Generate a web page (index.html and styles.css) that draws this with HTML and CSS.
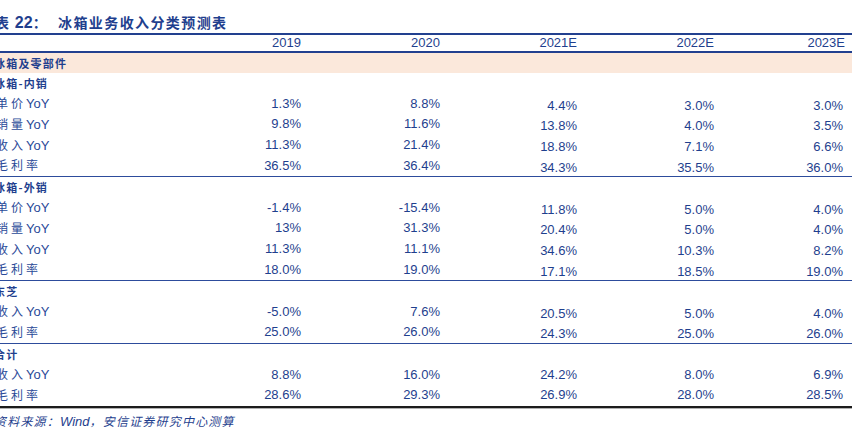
FILE: index.html
```html
<!DOCTYPE html>
<html lang="zh">
<head>
<meta charset="utf-8">
<title>表 22：冰箱业务收入分类预测表</title>
<link rel="stylesheet" href="styles.css">
</head>
<body>
<div class="page">
  <div class="title"><span class="cjk">表</span> 22<span class="cjk colon">：</span><span class="cjk">冰箱业务收入分类预测表</span></div>
  <div class="table">
    <div class="row head">
      <div class="lbl"></div><div class="num">2019</div><div class="num">2020</div><div class="num">2021E</div><div class="num">2022E</div><div class="num last">2023E</div><div></div>
    </div>
    <div class="row band"><div class="lbl sec">冰箱及零部件</div></div>
    <div class="section">
      <div class="row"><div class="lbl sec">冰箱-内销</div></div>
      <div class="row"><div class="lbl"><span class="c">单价</span>YoY</div><div class="num">1.3%</div><div class="num">8.8%</div><div class="num est">4.4%</div><div class="num est">3.0%</div><div class="num est">3.0%</div></div>
      <div class="row"><div class="lbl"><span class="c">销量</span>YoY</div><div class="num">9.8%</div><div class="num">11.6%</div><div class="num est">13.8%</div><div class="num est">4.0%</div><div class="num est">3.5%</div></div>
      <div class="row"><div class="lbl"><span class="c">收入</span>YoY</div><div class="num">11.3%</div><div class="num">21.4%</div><div class="num est">18.8%</div><div class="num est">7.1%</div><div class="num est">6.6%</div></div>
      <div class="row"><div class="lbl"><span class="c">毛利率</span></div><div class="num">36.5%</div><div class="num">36.4%</div><div class="num est">34.3%</div><div class="num est">35.5%</div><div class="num est">36.0%</div></div>
    </div>
    <div class="section">
      <div class="row"><div class="lbl sec">冰箱-外销</div></div>
      <div class="row"><div class="lbl"><span class="c">单价</span>YoY</div><div class="num">-1.4%</div><div class="num">-15.4%</div><div class="num est">11.8%</div><div class="num est">5.0%</div><div class="num est">4.0%</div></div>
      <div class="row"><div class="lbl"><span class="c">销量</span>YoY</div><div class="num">13%</div><div class="num">31.3%</div><div class="num est">20.4%</div><div class="num est">5.0%</div><div class="num est">4.0%</div></div>
      <div class="row"><div class="lbl"><span class="c">收入</span>YoY</div><div class="num">11.3%</div><div class="num">11.1%</div><div class="num est">34.6%</div><div class="num est">10.3%</div><div class="num est">8.2%</div></div>
      <div class="row"><div class="lbl"><span class="c">毛利率</span></div><div class="num">18.0%</div><div class="num">19.0%</div><div class="num est">17.1%</div><div class="num est">18.5%</div><div class="num est">19.0%</div></div>
    </div>
    <div class="section">
      <div class="row"><div class="lbl sec">东芝</div></div>
      <div class="row"><div class="lbl"><span class="c">收入</span>YoY</div><div class="num">-5.0%</div><div class="num">7.6%</div><div class="num est">20.5%</div><div class="num est">5.0%</div><div class="num est">4.0%</div></div>
      <div class="row"><div class="lbl"><span class="c">毛利率</span></div><div class="num">25.0%</div><div class="num">26.0%</div><div class="num est">24.3%</div><div class="num est">25.0%</div><div class="num est">26.0%</div></div>
    </div>
    <div class="section final">
      <div class="row"><div class="lbl sec">合计</div></div>
      <div class="row"><div class="lbl"><span class="c">收入</span>YoY</div><div class="num">8.8%</div><div class="num">16.0%</div><div class="num">24.2%</div><div class="num">8.0%</div><div class="num">6.9%</div></div>
      <div class="row"><div class="lbl"><span class="c">毛利率</span></div><div class="num">28.6%</div><div class="num">29.3%</div><div class="num">26.9%</div><div class="num">28.0%</div><div class="num">28.5%</div></div>
    </div>
  </div>
  <div class="source"><span class="c">资料来源：</span>Wind<span class="c">，安信证券研究中心测算</span></div>
</div>
</body>
</html>
```

FILE: styles.css
```css
html, body {
  margin: 0;
  padding: 0;
  background: #ffffff;
}
body {
  overflow: hidden;
  font-family: "Liberation Sans", Arial, "Noto Sans CJK SC", sans-serif;
  color: #1f3f8e;
}
.page {
  margin-left: -6px;
  width: 858px;
}
.title {
  margin-top: 12px;
  height: 21px;
  line-height: 21px;
  font-size: 16px;
  font-weight: bold;
  color: #1f3f8e;
  padding-left: 1px;
}
.title .cjk {
  font-family: "Noto Sans CJK SC", sans-serif;
  font-size: 14px;
  letter-spacing: 1.4px;
}
.title .colon {
  padding-right: 10px;
}
.table {
  width: 858px;
}
.row {
  display: grid;
  grid-template-columns: 211px 96px 139px 137px 137px 129px 9px;
  height: 20.6px;
  align-items: center;
  font-size: 13px;
}
.row.head {
  height: 16px;
  border-top: 2px solid #22408f;
  border-bottom: 2px solid #22408f;
  align-items: center;
}
.row.band {
  height: 20px;
  background: #fbe8db;
}
.num {
  text-align: right;
  white-space: nowrap;
  line-height: 16px;
}
.head .num.last {
  margin-right: -2px;
}
.num.est {
  padding-top: 4px;
}
.lbl {
  white-space: nowrap;
  font-size: 13px;
  line-height: 16px;
  padding-left: 2px;
  color: #2a4a98;
}
.lbl .c {
  font-family: "Noto Sans CJK SC", sans-serif;
  font-size: 12px;
  letter-spacing: 3px;
}
.lbl.sec {
  padding-left: 0;
  font-family: "Noto Sans CJK SC", sans-serif;
  font-size: 11px;
  font-weight: bold;
  letter-spacing: 1.2px;
  color: #1f3f8e;
}
.section {
  border-bottom: 1.5px solid #2d4c9c;
}
.section.final {
  border-bottom: 2px solid #1c1c1c;
  box-shadow: 0 1px 0 #b0b0b0;
}
.source {
  margin-top: 4px;
  height: 17px;
  line-height: 17px;
  font-size: 13px;
  font-style: italic;
  color: #1f3f8e;
  padding-left: 0;
}
.source .c {
  font-family: "Noto Sans CJK SC", sans-serif;
  font-size: 12px;
  letter-spacing: 1.2px;
}
```
